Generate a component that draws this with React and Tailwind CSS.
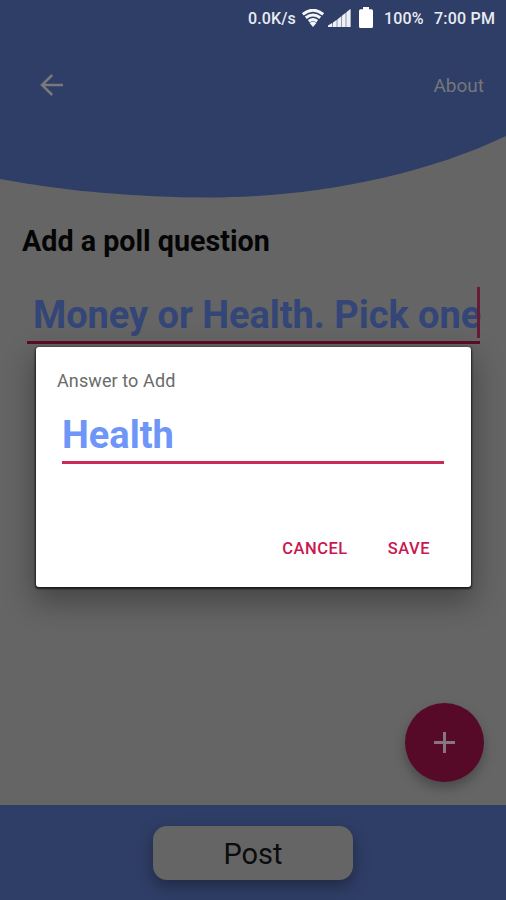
function StatusBar() {
  return (
    <div className="flex h-9 items-center pl-[248px] text-[16px] font-medium text-[#e8ebf2]">
      <span className="mt-px w-[54px] whitespace-nowrap tracking-[0.1px]">0.0K/s</span>
      <svg className="h-[18px] w-[22px] shrink-0" viewBox="0 0 22 18" fill="none" stroke="#f4f6fa" strokeWidth="3">
        <path d="M.8 5.2Q11-2.7 21.2 5.2" />
        <path d="M3.8 8.8Q11 3.1 18.2 8.8" />
        <path d="M6.8 12.2Q11 9 15.2 12.2" />
        <path d="M7.6 14Q11 11.6 14.4 14L11 18Z" fill="#f4f6fa" stroke="none" />
      </svg>
      <svg className="ml-[4px] h-[18px] w-[24px] shrink-0" viewBox="0 0 24 18" fill="#eef0f5">
        <path d="M0 18L22.5 0V18Z" fill="#8f98ae" />
        <path d="M0 18V16.5L4 14V18ZM5 18V13.5L8.5 11V18ZM9.5 18V10.4L13 7.6V18ZM14 18V6.8L17.5 4V18ZM18.5 18V3.2L22.5 0V18Z" />
      </svg>
      <svg className="ml-[7px] h-[21px] w-[14px] shrink-0 -translate-y-px" viewBox="0 0 14 21" fill="white">
        <path d="M4 0H10V2.3H12.5Q14 2.3 14 4V19.5Q14 21 12.5 21H1.5Q0 21 0 19.5V4Q0 2.3 1.5 2.3H4Z" />
      </svg>
      <span className="ml-[11px] mt-px w-[50px] whitespace-nowrap tracking-[0.15px]">100%</span>
      <span className="mt-px whitespace-nowrap tracking-[0.2px]">7:00 PM</span>
    </div>
  );
}

function Header() {
  return (
    <header className="relative h-[200px]">
      <svg className="absolute inset-0" width="506" height="200" viewBox="0 0 506 200">
        <path d="M0 0H506V136C420 177 310 197.5 208 197.5C137 197.5 65 191 0 179Z" fill="#2f3e66" />
      </svg>
      <div className="relative">
        <StatusBar />
        <div className="flex h-[98px] items-center justify-between pl-[40px] pr-[22px]">
          <svg width="23" height="22" viewBox="0 0 23 22" fill="none" stroke="#77797a" strokeWidth="2.5">
            <path d="M23 11H2M12.2 1L2 11L12.2 21" />
          </svg>
          <span className="mt-[2px] text-[19px] text-[#74777c]">About</span>
        </div>
      </div>
    </header>
  );
}

function AnswerDialog() {
  return (
    <section className="absolute left-[36px] top-[347px] flex h-[240px] w-[435px] flex-col rounded-[3px] bg-white shadow-[0_1px_2px_1px_rgba(0,0,0,0.65),0_12px_30px_3px_rgba(0,0,0,0.32)]">
      <h2 className="ml-[21px] mt-[22px] text-[18px] leading-[24px] tracking-[0.1px] text-[#6b6b6b]">Answer to Add</h2>
      <div className="ml-[26px] mt-[16px] h-[55px] w-[382px] border-b-[3px] border-[#cb2a55] text-[38px] font-bold leading-[52px] text-[#6e95f8]">
        Health
      </div>
      <div className="mt-[73px] flex justify-end gap-[40px] pr-[41px] text-[16.5px] font-medium leading-[24px] tracking-[0.5px] text-[#c9184f]">
        <button>CANCEL</button>
        <button>SAVE</button>
      </div>
    </section>
  );
}

export default function App() {
  return (
    <div className="relative flex h-[900px] w-[506px] flex-col overflow-hidden bg-[#656565] font-[Roboto,sans-serif]">
      <Header />
      <main className="flex flex-1 flex-col">
        <h1 className="ml-[22px] mt-[23px] text-[28.7px] font-bold leading-[36px] text-[#050505]">Add a poll question</h1>
        <div className="ml-[27px] mt-[28px] flex h-[57px] w-[453px] items-start justify-between border-b-[3px] border-[#5c0c2b]">
          <span className="ml-[6px] w-[444px] whitespace-nowrap text-[38px] font-bold leading-[56px] tracking-[-0.05px] text-[#334677]">Money or Health. Pick one</span>
          <span className="h-[51px] w-[3px] shrink-0 bg-[#681b37]" />
        </div>
        <button className="mb-[23px] mr-[22px] mt-auto flex size-[79px] items-center justify-center self-end rounded-full bg-[#570a28] shadow-[0_6px_12px_rgba(0,0,0,0.28)]">
          <svg width="21" height="21" viewBox="0 0 21 21" stroke="#85777d" strokeWidth="3">
            <path d="M10.5 0V21M0 10.5H21" />
          </svg>
        </button>
      </main>
      <footer className="flex h-[95px] shrink-0 justify-center bg-[#2f3e66] pt-[21px]">
        <button className="h-[54px] w-[200px] rounded-[14px] bg-[#656565] text-[29px] leading-[56px] text-[#0c0c0c] shadow-[0_6px_16px_rgba(0,0,0,0.34)]">Post</button>
      </footer>
      <AnswerDialog />
    </div>
  );
}
